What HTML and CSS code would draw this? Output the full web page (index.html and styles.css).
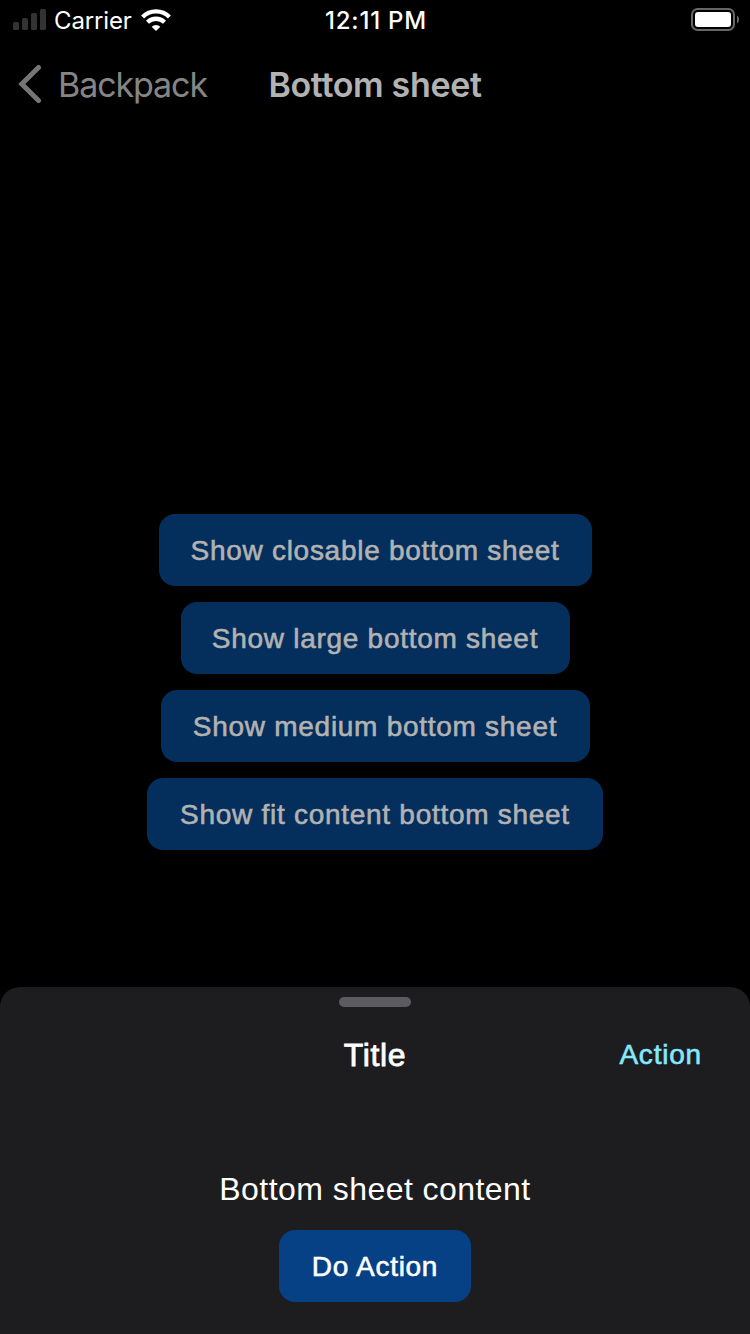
FILE: index.html
```html
<!DOCTYPE html>
<html lang="en">
<head>
<meta charset="utf-8">
<title>Bottom sheet</title>
<link rel="stylesheet" href="styles.css">
</head>
<body>
<div class="screen">
  <header class="status">
    <div class="status-left">
      <svg class="signal" width="34" height="22" viewBox="0 0 34 22" fill="#333"><rect x="0" y="13" width="6" height="8" rx="1.6"/><rect x="9" y="9" width="6" height="12" rx="1.6"/><rect x="18" y="4" width="6" height="17" rx="1.6"/><rect x="27" y="0" width="6" height="21" rx="1.6"/></svg>
      <span class="carrier">Carrier</span>
      <svg class="wifi" width="30" height="22" viewBox="0 0 30 22"><g fill="none" stroke="#fff" stroke-width="4.300"><path d="M1.600 8a18.900 18.900 0 0 1 26.800 0"/><path d="M6.500 13.300a12 12 0 0 1 17 0"/></g><path d="M15 22l-4.300-4.300a6.100 6.100 0 0 1 8.600 0z" fill="#fff"/></svg>
    </div>
    <div class="time">12:11 PM</div>
    <div class="status-right">
      <svg width="48" height="24" viewBox="0 0 48 24"><rect x="1" y="1" width="42" height="21" rx="5.5" fill="none" stroke="#666" stroke-width="2"/><rect x="4" y="4" width="36" height="15" rx="3" fill="#fff"/><path d="M46 7.500c1.600 1 2 2.200 2 4s-.4 3-2 4z" fill="#666"/></svg>
    </div>
  </header>
  <nav class="nav">
    <div class="back">
      <svg width="24" height="40" viewBox="0 0 24 40"><path d="M20.500 3.500L3.800 20l16.700 16.500" fill="none" stroke="#757575" stroke-width="5" stroke-linecap="round" stroke-linejoin="miter"/></svg>
      <span class="back-label">Backpack</span>
    </div>
    <h1 class="heading">Bottom sheet</h1>
    <div></div>
  </nav>
  <main class="content">
    <button class="btn closable">Show closable bottom sheet</button>
    <button class="btn large">Show large bottom sheet</button>
    <button class="btn medium">Show medium bottom sheet</button>
    <button class="btn fit">Show fit content bottom sheet</button>
  </main>
  <section class="sheet">
    <div class="handle"></div>
    <div class="sheet-head">
      <div></div>
      <h2 class="title">Title</h2>
      <a class="action">Action</a>
    </div>
    <p class="message">Bottom sheet content</p>
    <button class="btn primary">Do Action</button>
  </section>
</div>
</body>
</html>
```
FILE: styles.css
```css
* { box-sizing: border-box; }
body { margin: 0; background: #000; }
.screen {
  width: 750px;
  height: 1334px;
  display: flex;
  flex-direction: column;
  overflow: hidden;
  background: #000;
  font-family: "Liberation Sans", Arial, sans-serif;
  white-space: nowrap;
}
.status {
  height: 40px;
  display: grid;
  grid-template-columns: 1fr auto 1fr;
  align-items: center;
  padding: 0 11px 0 13px;
  font: 400 24px/40px Inter, sans-serif;
  color: #fff;
}
.status-left { display: flex; align-items: center; }
.signal { margin-bottom: 1px; }
.carrier { margin-left: 7px; letter-spacing: -0.15px; width: 78px; padding-top: 1px; }
.wifi { margin: 0 0 2px 9px; }
.time { font-weight: 500; letter-spacing: 0.8px; padding-top: 1px; }
.status-right { display: flex; justify-content: flex-end; padding-bottom: 2px; }
.nav {
  height: 88px;
  display: grid;
  grid-template-columns: 1fr auto 1fr;
  align-items: center;
  padding: 0 18px;
  font: 400 34px/44px Inter, sans-serif;
  color: #858585;
}
.back { display: flex; align-items: center; gap: 16px; }
.back svg { flex: none; }
.back-label { letter-spacing: -1.1px; padding-top: 1px; }
.heading { margin: 0; padding-top: 1px; font-size: 34px; font-weight: 600; letter-spacing: -0.35px; color: #b2b2b2; }
.content {
  height: 859px;
  padding-top: 386px;
  display: flex;
  flex-direction: column;
  align-items: center;
  gap: 16px;
}
.btn {
  height: 72px;
  padding: 2px 0 0;
  border: 0;
  border-radius: 16px;
  background: #042e5c;
  color: #b2b2b2;
  font: 400 28px/70px "Liberation Sans", Arial, sans-serif;
  letter-spacing: 0.72px;
  -webkit-text-stroke: 0.6px currentColor;
}
.closable { width: 433px; }
.large { width: 389px; }
.medium { width: 429px; }
.fit { width: 456px; }
.sheet {
  flex: 1;
  display: flex;
  flex-direction: column;
  align-items: center;
  padding-top: 10px;
  border-radius: 20px 20px 0 0;
  background: #1d1d1f;
  color: #fff;
}
.handle { width: 72px; height: 10px; border-radius: 5px; background: #5b5b60; }
.sheet-head {
  width: 100%;
  height: 96px;
  display: grid;
  grid-template-columns: 1fr auto 1fr;
  align-items: center;
  padding: 0 48px;
}
.title { margin: 0; font-size: 32px; font-weight: 400; letter-spacing: 0.6px; -webkit-text-stroke: 0.8px #fff; }
.action { justify-self: end; font-size: 28px; color: #84e9ff; letter-spacing: 0.8px; -webkit-text-stroke: 0.6px currentColor; }
.message { margin: 66px 0 0; font-size: 32px; line-height: 40px; letter-spacing: 0.45px; }
.primary { width: 192px; margin-top: 21px; background: #054184; color: #fff; }
```
